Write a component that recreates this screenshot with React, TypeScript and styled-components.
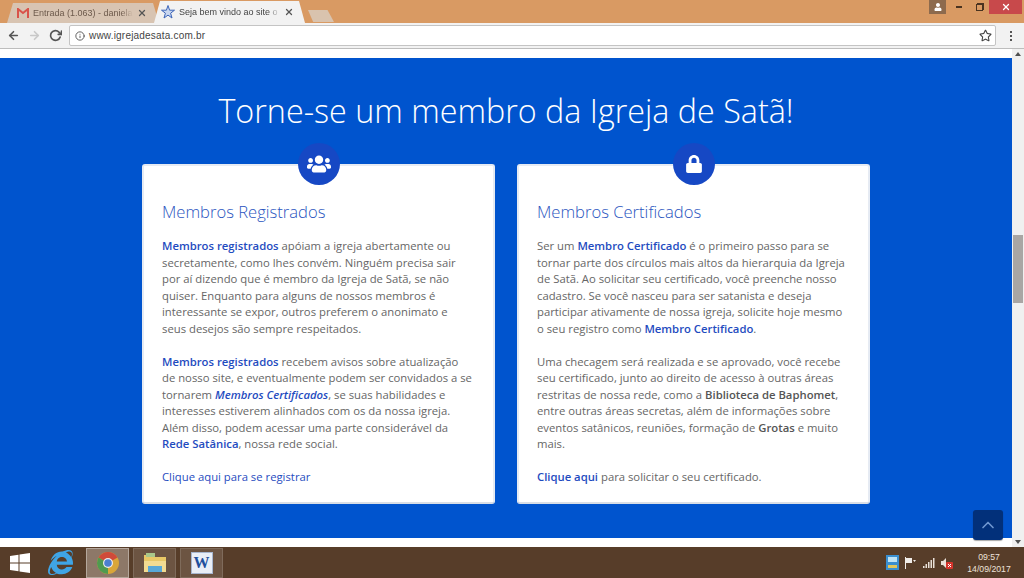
import React from "react";
import styled, { createGlobalStyle } from "styled-components";
import { FaUsers, FaUser, FaLock, FaInternetExplorer, FaRegStar } from "react-icons/fa";
import { FiArrowLeft, FiArrowRight, FiRotateCw, FiX, FiInfo, FiChevronUp } from "react-icons/fi";

const GlobalStyle = createGlobalStyle`
	html, body {
		margin: 0;
		padding: 0;
		width: 1024px;
		height: 578px;
		overflow: hidden;
		font-family: "Open Sans", "Liberation Sans", sans-serif;
	}
	* {
		box-sizing: border-box;
	}
`;

const Screen = styled.div`
	position: relative;
	width: 1024px;
	height: 578px;
	display: flex;
	flex-direction: column;
	overflow: hidden;
	background: #fff;
`;

const TitleBar = styled.div`
	height: 23px;
	flex: none;
	display: flex;
	align-items: flex-end;
	justify-content: space-between;
	padding-left: 7px;
	background: #d99a63;
`;

const Tabs = styled.div`
	display: flex;
	align-items: flex-end;
`;

const Tab = styled.div<{ $active?: boolean }>`
	width: ${(p) => (p.$active ? "151px" : "152px")};
	height: ${(p) => (p.$active ? "22px" : "20px")};
	margin-right: ${(p) => (p.$active ? "0" : "-5px")};
	padding: ${(p) => (p.$active ? "0 11px 0 7px" : "0 12px 0 10px")};
	display: flex;
	align-items: center;
	gap: 4px;
	clip-path: polygon(0 100%, 6px 0, calc(100% - 6px) 0, 100% 100%);
	background: ${(p) => (p.$active ? "#f2f2f2" : "#d8c4b2")};
	color: ${(p) => (p.$active ? "#444" : "#6d5a4c")};
	font: 9px "Liberation Sans", sans-serif;
`;

const TabLabel = styled.span`
	flex: 1;
	min-width: 0;
	overflow: hidden;
	white-space: nowrap;
	mask-image: linear-gradient(90deg, #000 88%, transparent);
`;

const TabClose = styled(FiX)`
	flex: none;
	font-size: 10px;
	color: #555;
	stroke-width: 3;
`;

const NewTab = styled.div`
	width: 26px;
	height: 12px;
	margin: 0 0 1px 3px;
	clip-path: polygon(0 0, 75% 0, 100% 100%, 20% 100%);
	background: #d9c3ae;
`;

const WindowControls = styled.div`
	display: flex;
	align-items: flex-start;
	align-self: flex-start;
	height: 14px;
`;

const ProfileButton = styled.div`
	width: 17px;
	height: 14px;
	margin-right: 3px;
	display: flex;
	justify-content: center;
	align-items: center;
	background: #8d6a4d;
`;

const ControlButton = styled.div`
	width: 20px;
	height: 14px;
	display: flex;
	justify-content: center;
	align-items: center;
`;

const MinimizeMark = styled.i`
	width: 6px;
	height: 2px;
	background: #4a3320;
`;

const RestoreMark = styled.i`
	width: 7px;
	height: 7px;
	margin-top: 1px;
	border: 1px solid #4a3320;
	box-shadow: 1px -1px 0 0 #4a3320;
`;

const CloseButton = styled.div`
	width: 33px;
	height: 14px;
	margin-right: 2px;
	display: flex;
	justify-content: center;
	align-items: center;
	background: #c8494b;
	color: #fff;
	font-size: 10px;
	svg {
		stroke-width: 3;
	}
`;

const Toolbar = styled.div`
	height: 26px;
	flex: none;
	display: flex;
	align-items: center;
	padding: 0 5px 0 7px;
	background: #f2f2f2;
	border-bottom: 1px solid #bdbdbd;
`;

const NavIcon = styled.span<{ $faded?: boolean }>`
	width: 21px;
	display: flex;
	font-size: 13px;
	color: ${(p) => (p.$faded ? "#c8c8c8" : "#555")};
	svg {
		stroke-width: 3;
	}
`;

const AddressBar = styled.div`
	width: 927px;
	height: 21px;
	margin-left: -1px;
	padding: 0 3px 0 5px;
	display: flex;
	align-items: center;
	gap: 4px;
	background: #fff;
	border: 1px solid #c4c4c4;
	border-radius: 2px;
	font: 10px "Liberation Sans", sans-serif;
	letter-spacing: 0.2px;
	color: #444;
`;

const Url = styled.span`
	flex: 1;
`;

const MenuDots = styled.div`
	margin-left: 14px;
	display: flex;
	flex-direction: column;
	gap: 2px;
`;

const Dot = styled.i`
	width: 2px;
	height: 2px;
	background: #555;
`;

const Viewport = styled.div`
	flex: 1;
	min-height: 0;
	display: flex;
`;

const Page = styled.div`
	flex: 1;
	padding: 9px 0;
	background: #fff;
`;

const Band = styled.main`
	position: relative;
	height: 480px;
	padding-top: 30px;
	display: flex;
	flex-direction: column;
	align-items: center;
	background: #0054ce;
`;

const Title = styled.h1`
	margin: 0;
	height: 44px;
	font-size: 32.3px;
	line-height: 44px;
	font-weight: 300;
	color: #fff;
	white-space: nowrap;
`;

const Cards = styled.div`
	margin-top: 32px;
	display: flex;
	gap: 22px;
`;

const Card = styled.section`
	position: relative;
	width: 353px;
	height: 340px;
	padding: 36px 20px 0 18px;
	background: #fff;
	border: 2px solid #e6ebf3;
	border-bottom-color: #d9dee6;
	border-radius: 3px;
`;

const IconBadge = styled.div`
	position: absolute;
	top: -23px;
	left: 154px;
	width: 42px;
	height: 42px;
	display: flex;
	align-items: center;
	justify-content: center;
	border-radius: 50%;
	background: #1648c4;
	color: #fff;
`;

const CardTitle = styled.h2`
	margin: 0 0 16px;
	font-size: 16.6px;
	line-height: 20px;
	font-weight: 300;
	color: #2a55c0;
`;

const Paragraph = styled.p`
	margin: 0 0 16.5px;
	font-size: 11.3px;
	line-height: 16.5px;
	color: #666;
`;

const Accent = styled.strong`
	font-weight: 600;
	color: #1f4cc0;
`;

const AccentItalic = styled(Accent)`
	font-style: italic;
`;

const Dark = styled.strong`
	font-weight: 600;
	color: #555;
`;

const PlainLink = styled.span`
	color: #1f4cc0;
`;

const BackToTop = styled.div`
	position: absolute;
	right: 9px;
	bottom: -2px;
	width: 30px;
	height: 30px;
	display: flex;
	align-items: center;
	justify-content: center;
	border-radius: 3px;
	background: #02307a;
	box-shadow: 0 1px 1px rgba(0, 0, 0, 0.35);
	color: #6f97d0;
	font-size: 20px;
`;

const Scrollbar = styled.div`
	width: 12px;
	flex: none;
	display: flex;
	flex-direction: column;
	align-items: center;
	justify-content: space-between;
	background: #f0f0f0;
	padding: 3px 0;
`;

const Arrow = styled.i<{ $down?: boolean }>`
	width: 0;
	height: 0;
	border-left: 3.5px solid transparent;
	border-right: 3.5px solid transparent;
	${(p) =>
		p.$down ? "border-top: 4px solid #505050;" : "border-bottom: 4px solid #505050;"}
`;

const ScrollTrack = styled.div`
	flex: 1;
	width: 100%;
	padding-top: 179px;
`;

const ScrollThumb = styled.div`
	width: 10px;
	height: 68px;
	margin: 0 auto;
	background: #a9a6a4;
`;

const Taskbar = styled.footer`
	height: 31px;
	flex: none;
	display: flex;
	align-items: center;
	background: #573d29;
`;

const StartButton = styled.div`
	width: 39px;
	display: flex;
	justify-content: center;
`;

const TaskIcon = styled.div<{ $state?: "active" | "open" }>`
	width: 43px;
	height: 30px;
	margin-right: 4px;
	display: flex;
	align-items: center;
	justify-content: center;
	color: #3fa5e6;
	font-size: 25px;
	background: ${(p) =>
		p.$state === "active" ? "#8d7868" : p.$state === "open" ? "#6c5442" : "transparent"};
	border: ${(p) =>
		p.$state === "active"
			? "1px solid #b5a79c"
			: p.$state === "open"
				? "1px solid #7f6b5b"
				: "0"};
`;

const WordTile = styled.div`
	width: 22px;
	height: 22px;
	display: flex;
	align-items: center;
	justify-content: center;
	background: #e9eef6;
	border: 1px solid #a7b6cf;
	color: #1f4f9c;
	font: bold 16px "Liberation Serif", serif;
`;

const Tray = styled.div`
	margin-left: auto;
	display: flex;
	align-items: center;
	padding-right: 5px;
`;

const TraySlot = styled.div<{ $width: number }>`
	width: ${(p) => p.$width}px;
	display: flex;
`;

const Clock = styled.div`
	width: 60px;
	text-align: center;
	font: 8.7px/12px "Liberation Sans", sans-serif;
	color: #eee3da;
`;

function GmailIcon() {
	return (
		<svg width="12" height="10" viewBox="0 0 12 10">
			<path d="M1 10V1l5 4 5-4v9" fill="none" stroke="#d9534a" strokeWidth="2" />
		</svg>
	);
}

function StarLogo() {
	return (
		<svg width="14" height="14" viewBox="0 0 14 14">
			<path
				d="M7 0.5 8.6 5.2 13.5 5.2 9.6 8.2 11 13 7 10.1 3 13 4.4 8.2 0.5 5.2 5.4 5.2Z"
				fill="#c9d7f0"
				stroke="#3c64b8"
			/>
		</svg>
	);
}

function ChromeLogo() {
	return (
		<svg width="22" height="22" viewBox="0 0 22 22">
			<circle cx="11" cy="11" r="11" fill="#d9a63a" />
			<path d="M11 11 1.500 5.500A11 11 0 0 1 20.500 5.500Z" fill="#cf4a3a" />
			<path d="M11 11 1.500 5.500A11 11 0 0 0 11 22Z" fill="#4f9a50" />
			<circle cx="11" cy="11" r="5" fill="#f1eeea" />
			<circle cx="11" cy="11" r="3.8" fill="#4c7fd1" />
		</svg>
	);
}

function WindowsLogo() {
	return (
		<svg width="20" height="20" viewBox="0 0 20 20">
			<path d="M0 3 8.500 1.800V9.500H0ZM9.500 1.600 20 0V9.500H9.500ZM0 10.500H8.500V18.200L0 17ZM9.500 10.500H20V20L9.500 18.400Z" fill="#fff" />
		</svg>
	);
}

function FolderIcon() {
	return (
		<svg width="24" height="22" viewBox="0 0 24 22">
			<path d="M1 3h8l2 2h12v15H1Z" fill="#e9c866" />
			<path d="M3 1h9v4H3Z" fill="#a9c88a" />
			<path d="M1 9h22v11H1Z" fill="#f3dc92" />
			<path d="M5 14h14v6H5Z" fill="#58a8d8" />
		</svg>
	);
}

function SignalIcon() {
	return (
		<svg width="12" height="10" viewBox="0 0 12 10">
			<path d="M0 8h1.500v2H0ZM2.500 6H4v4H2.500ZM5 4h1.500v6H5ZM7.500 2H9v8H7.500ZM10 0h1.500v10H10Z" fill="#e8e0d8" />
		</svg>
	);
}

function FlagIcon() {
	return (
		<svg width="11" height="12" viewBox="0 0 11 12">
			<path d="M0 0h1v12H0ZM1 1h6v5H1ZM8 3h3L9.500 5Z" fill="#f0ece8" />
		</svg>
	);
}

function MutedIcon() {
	return (
		<svg width="12" height="12" viewBox="0 0 12 12">
			<path d="M0 4h2l3-3v10L2 8H0Z" fill="#e8e0d8" />
			<rect x="5" y="5" width="7" height="7" rx="1" fill="#d4342c" />
			<path d="M7 7l3 3M10 7l-3 3" stroke="#fff" />
		</svg>
	);
}

function TrayAppIcon() {
	return (
		<svg width="13" height="15" viewBox="0 0 13 15">
			<rect width="13" height="15" fill="#3a8fd0" />
			<rect x="2" y="2" width="9" height="5" fill="#bfe3f5" />
			<rect x="2" y="10" width="9" height="3" fill="#e3c65a" />
		</svg>
	);
}

function App() {
	return (
		<Screen>
			<GlobalStyle />
			<TitleBar>
				<Tabs>
					<Tab>
						<GmailIcon />
						<TabLabel>Entrada (1.063) - daniela</TabLabel>
						<TabClose />
					</Tab>
					<Tab $active>
						<StarLogo />
						<TabLabel>Seja bem vindo ao site o</TabLabel>
						<TabClose />
					</Tab>
					<NewTab />
				</Tabs>
				<WindowControls>
					<ProfileButton>
						<FaUser size={8} color="#fff" />
					</ProfileButton>
					<ControlButton>
						<MinimizeMark />
					</ControlButton>
					<ControlButton>
						<RestoreMark />
					</ControlButton>
					<CloseButton>
						<FiX />
					</CloseButton>
				</WindowControls>
			</TitleBar>
			<Toolbar>
				<NavIcon>
					<FiArrowLeft />
				</NavIcon>
				<NavIcon $faded>
					<FiArrowRight />
				</NavIcon>
				<NavIcon>
					<FiRotateCw />
				</NavIcon>
				<AddressBar>
					<FiInfo size={10} />
					<Url>www.igrejadesata.com.br</Url>
					<FaRegStar size={13} />
				</AddressBar>
				<MenuDots>
					<Dot />
					<Dot />
					<Dot />
				</MenuDots>
			</Toolbar>
			<Viewport>
				<Page>
					<Band>
						<Title>Torne-se um membro da Igreja de Satã!</Title>
						<Cards>
							<Card>
								<IconBadge>
									<FaUsers size={24} />
								</IconBadge>
								<CardTitle>Membros Registrados</CardTitle>
								<Paragraph>
									<Accent>Membros registrados</Accent> apóiam a igreja abertamente ou
									secretamente, como lhes convém. Ninguém precisa sair por aí dizendo que é
									membro da Igreja de Satã, se não quiser. Enquanto para alguns de nossos
									membros é interessante se expor, outros preferem o anonimato e seus
									desejos são sempre respeitados.
								</Paragraph>
								<Paragraph>
									<Accent>Membros registrados</Accent> recebem avisos sobre atualização de
									nosso site, e eventualmente podem ser convidados a se tornarem{" "}
									<AccentItalic>Membros Certificados</AccentItalic>, se suas habilidades e
									interesses estiverem alinhados com os da nossa igreja. Além disso, podem
									acessar uma parte considerável da <Accent>Rede Satânica</Accent>, nossa
									rede social.
								</Paragraph>
								<Paragraph>
									<PlainLink>Clique aqui para se registrar</PlainLink>
								</Paragraph>
							</Card>
							<Card>
								<IconBadge>
									<FaLock size={18} />
								</IconBadge>
								<CardTitle>Membros Certificados</CardTitle>
								<Paragraph>
									Ser um <Accent>Membro Certificado</Accent> é o primeiro passo para se
									tornar parte dos círculos mais altos da hierarquia da Igreja de Satã. Ao
									solicitar seu certificado, você preenche nosso cadastro. Se você nasceu
									para ser satanista e deseja participar ativamente de nossa igreja, solicite
									hoje mesmo o seu registro como <Accent>Membro Certificado</Accent>.
								</Paragraph>
								<Paragraph>
									Uma checagem será realizada e se aprovado, você recebe seu certificado,
									junto ao direito de acesso à outras áreas restritas de nossa rede, como a{" "}
									<Dark>Biblioteca de Baphomet</Dark>, entre outras áreas secretas, além de
									informações sobre eventos satânicos, reuniões, formação de{" "}
									<Dark>Grotas</Dark> e muito mais.
								</Paragraph>
								<Paragraph>
									<Accent>Clique aqui</Accent> para solicitar o seu certificado.
								</Paragraph>
							</Card>
						</Cards>
						<BackToTop>
							<FiChevronUp />
						</BackToTop>
					</Band>
				</Page>
				<Scrollbar>
					<Arrow />
					<ScrollTrack>
						<ScrollThumb />
					</ScrollTrack>
					<Arrow $down />
				</Scrollbar>
			</Viewport>
			<Taskbar>
				<StartButton>
					<WindowsLogo />
				</StartButton>
				<TaskIcon>
					<FaInternetExplorer />
				</TaskIcon>
				<TaskIcon $state="active">
					<ChromeLogo />
				</TaskIcon>
				<TaskIcon $state="open">
					<FolderIcon />
				</TaskIcon>
				<TaskIcon $state="open">
					<WordTile>W</WordTile>
				</TaskIcon>
				<Tray>
					<TraySlot $width={19}>
						<TrayAppIcon />
					</TraySlot>
					<TraySlot $width={18}>
						<FlagIcon />
					</TraySlot>
					<TraySlot $width={18}>
						<SignalIcon />
					</TraySlot>
					<TraySlot $width={18}>
						<MutedIcon />
					</TraySlot>
					<Clock>
						09:57
						<br />
						14/09/2017
					</Clock>
				</Tray>
			</Taskbar>
		</Screen>
	);
}

export default App;
